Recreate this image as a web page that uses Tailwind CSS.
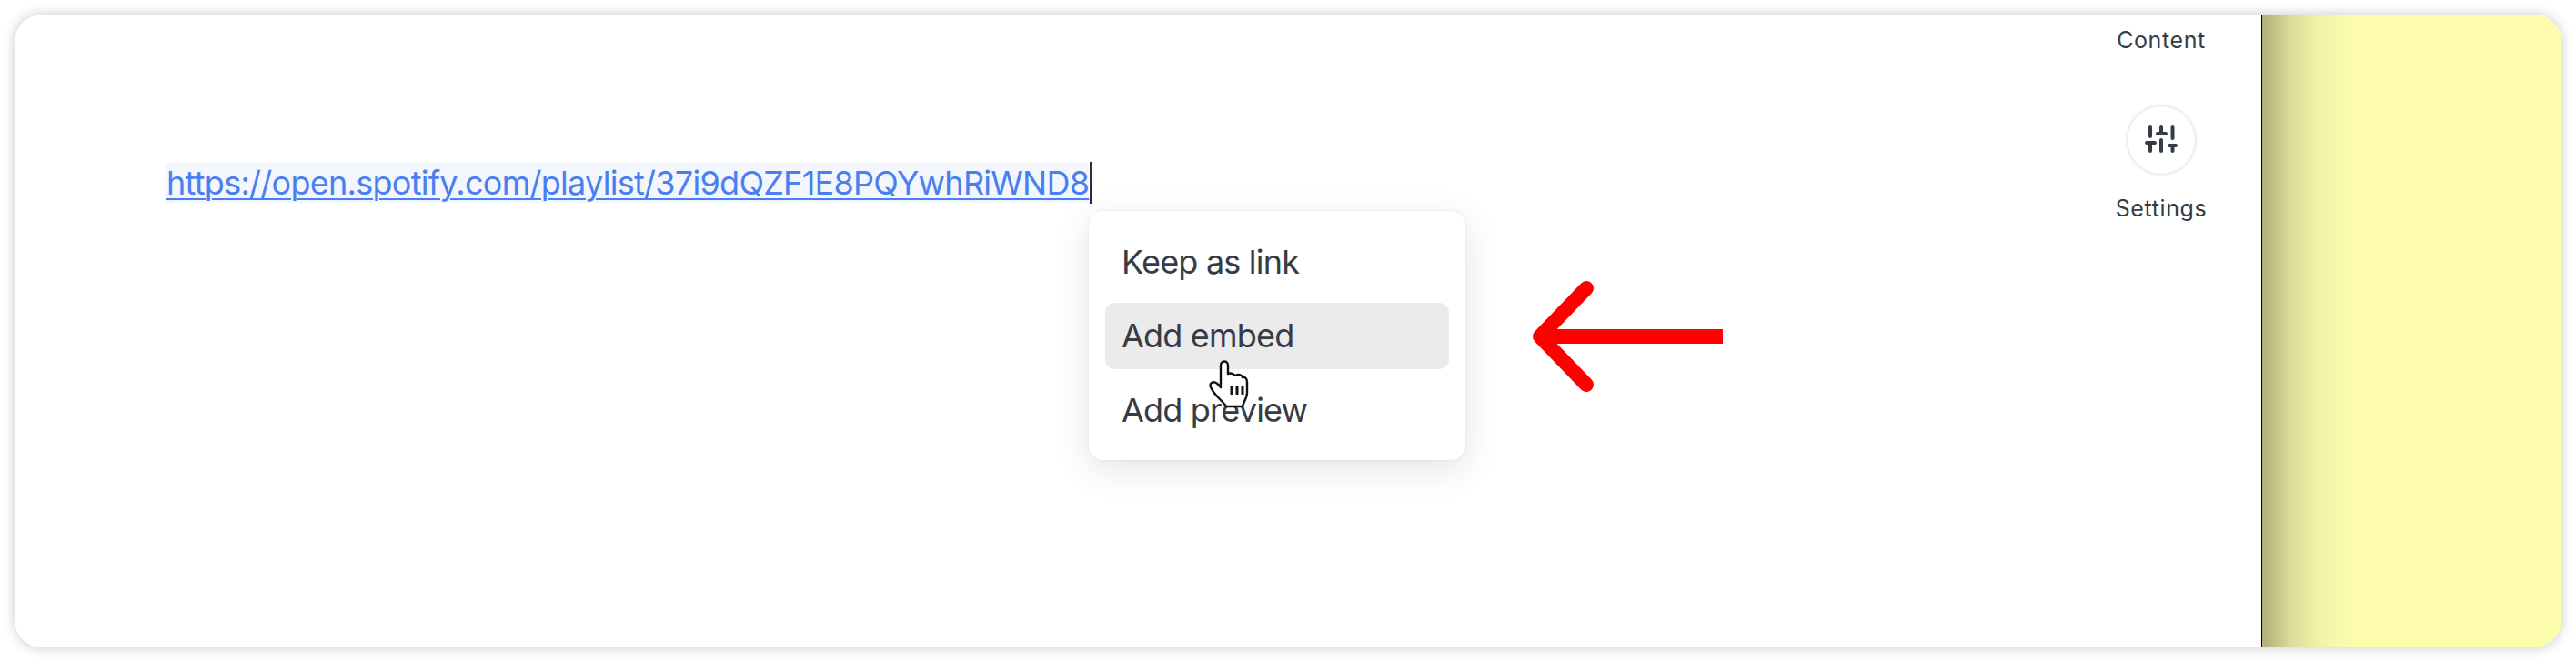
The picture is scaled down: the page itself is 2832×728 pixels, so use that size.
<!DOCTYPE html>
<html lang="en">
<head>
  <meta charset="UTF-8">
  <title>Embed menu</title>
  <script src="https://cdn.jsdelivr.net/npm/@tailwindcss/browser@4"></script>
</head>
<body class="bg-white h-[728px] overflow-hidden p-4 font-['Inter',sans-serif]">
  <div class="relative flex h-[696px] w-[2800px] overflow-hidden rounded-[30px] bg-white shadow-[0_0_14px_rgba(0,0,0,0.22)]">
    <!-- editor -->
    <div class="relative flex-1">
      <div class="absolute left-[167px] top-[162px] flex items-center">
        <a class="block h-[44px] bg-[#f3f6fc] text-[36px] leading-[44px] tracking-[-0.72px] text-[#4a7ff0] underline decoration-2 underline-offset-4">https://open.spotify.com/playlist/37i9dQZF1E8PQYwhRiWND8</a>
        <span class="ml-[1px] h-[46px] w-[2px] bg-[#2a2f36]"></span>
      </div>

      <!-- sidebar labels -->
      <div class="absolute left-[2280px] top-0 flex w-[160px] flex-col items-center text-[25px] tracking-[0.6px] text-[#363c44]">
        <span class="mt-[13px] leading-[30px]">Content</span>
        <div class="mt-[58px] flex h-[74px] w-[74px] items-center justify-center rounded-full bg-white shadow-[0_0_4px_rgba(0,0,0,0.2)]">
          <svg width="40" height="34" viewBox="0 0 40 34" fill="none" stroke="#363c44" stroke-width="4" stroke-linecap="round">
            <path d="M8 3V13M8 20V29M4 20H13"/>
            <path d="M20 3V10M20 17V29M16 10H25"/>
            <path d="M32.5 3V15M32.5 23V29M29 23H36"/>
          </svg>
        </div>
        <span class="mt-[23px] leading-[30px]">Settings</span>
      </div>

      <!-- popup menu -->
      <div class="absolute left-[1181px] top-[216px] flex h-[274px] w-[414px] flex-col justify-center gap-[8px] rounded-[16px] bg-white px-[18px] text-[36px] tracking-[-0.8px] text-[#363c44] shadow-[0_10px_40px_rgba(0,0,0,0.11),0_0_4px_rgba(0,0,0,0.06)]">
        <div class="flex h-[73px] items-center rounded-[10px] px-[18px]">Keep as link</div>
        <div class="flex h-[73px] items-center rounded-[10px] bg-[#ebebeb] px-[18px]">Add embed</div>
        <div class="flex h-[73px] items-center rounded-[10px] px-[18px] pt-[2px]">Add preview</div>
      </div>

      <!-- hand cursor -->
      <svg class="absolute left-[1313px] top-[380px]" width="46" height="56" viewBox="0 0 46 56">
        <path d="M13 6C13 0 21 0 21 6V15C24 14 27 15 29 17C33 15 36 16 37 19C40 18 42 21 42 24V36C42 42 38 46 37 51H19C16 46 10 42 5 35C2 31 0 27 3 25C6 23 10 26 13 30Z" fill="#fff" stroke="#111" stroke-width="2.4" stroke-linejoin="round"/>
        <path d="M25 28V38M31 28V38M37 28V38" stroke="#111" stroke-width="3"/>
      </svg>

      <!-- red arrow -->
      <svg class="absolute left-[1668px] top-[292px]" width="212" height="124" viewBox="0 0 212 124" fill="none">
        <path d="M210 62H12" stroke="#ff0000" stroke-width="16"/>
        <path d="M60 9L9 62L60 115" stroke="#ff0000" stroke-width="16" stroke-linecap="round" stroke-linejoin="round"/>
      </svg>
    </div>

    <!-- yellow note panel -->
    <div class="w-[330px] border-l border-black bg-[linear-gradient(90deg,#afae78_0px,#dcdc9c_32px,#f3f3a9_64px,#fdfdad_102px)]"></div>
  </div>
</body>
</html>
